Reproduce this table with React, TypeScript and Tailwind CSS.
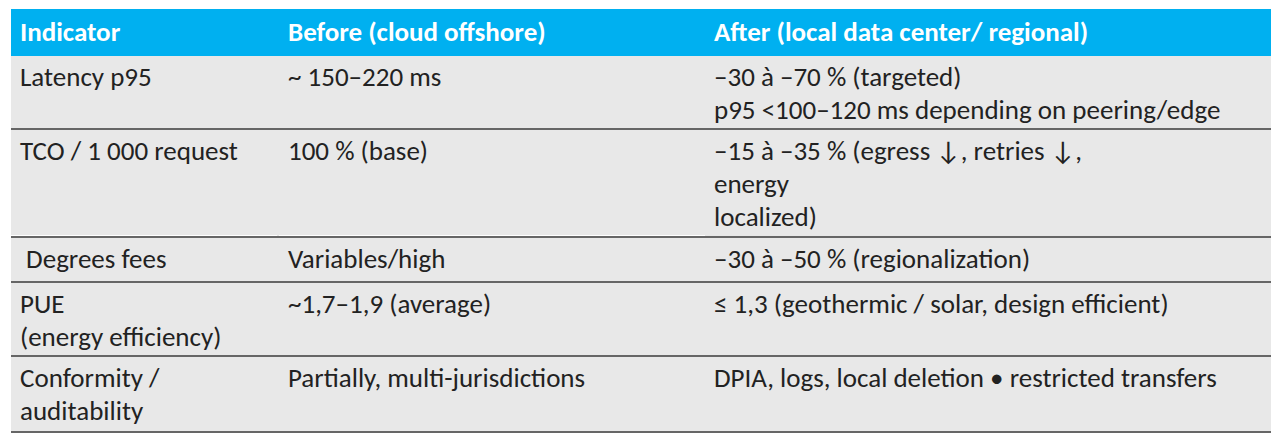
import React from 'react';

const font = { fontFamily: 'Carlito, Calibri, Lato, "Liberation Sans", sans-serif' };

const rows = [
  { h: 'h-[74px]', cells: [['Latency p95'], ['~ 150–220 ms'], ['–30 à –70 % (targeted)', 'p95 <100–120 ms depending on peering/edge']] },
  { h: 'h-[108px]', cells: [['TCO / 1 000 request'], ['100 % (base)'], ['–15 à –35 % (egress ↓, retries ↓,', 'energy', 'localized)']], whiteLine: true },
  { h: 'h-[45px]', cells: [['\u00a0Degrees fees'], ['Variables/high'], ['–30 à –50 % (regionalization)']] },
  { h: 'h-[74px]', cells: [['PUE', '(energy efficiency)'], ['~1,7–1,9 (average)'], ['≤ 1,3 (geothermic / solar, design efficient)']] },
  { h: 'h-[76px]', cells: [['Conformity /', 'auditability'], ['Partially, multi-jurisdictions'], ['DPIA, logs, local deletion • restricted transfers']] },
];

export default function App() {
  return (
    <div className="w-[1280px] h-[436px] bg-white pt-[9px] pl-[11px]" style={font}>
      <div className="w-[1260px]">
        <div className="grid grid-cols-[268px_426px_566px] h-[47px] bg-[#00b0f0] text-white font-bold text-[27px] items-center">
          <div className="pl-[9px]">Indicator</div>
          <div className="pl-[9px]">Before (cloud offshore)</div>
          <div className="pl-[9px]">After (local data center/ regional)</div>
        </div>
        {rows.map((r, i) => (
          <div
            key={i}
            className={`grid grid-cols-[268px_426px_566px] ${r.h} bg-[#e8e8e8] border-b-2 border-[#666666] text-[#222222] text-[27px] leading-[33px]`}
          >
            {r.cells.map((c, j) => (
              <div
                key={j}
                className={`pl-[9px] pt-[4px] ${r.whiteLine && j < 2 ? 'border-b border-white' : ''} ${r.whiteLine && j === 0 ? 'mr-[2px]' : ''}`}
              >
                {c.map((line, k) => (
                  <div key={k} className="whitespace-nowrap">{line}</div>
                ))}
              </div>
            ))}
          </div>
        ))}
      </div>
    </div>
  );
}
